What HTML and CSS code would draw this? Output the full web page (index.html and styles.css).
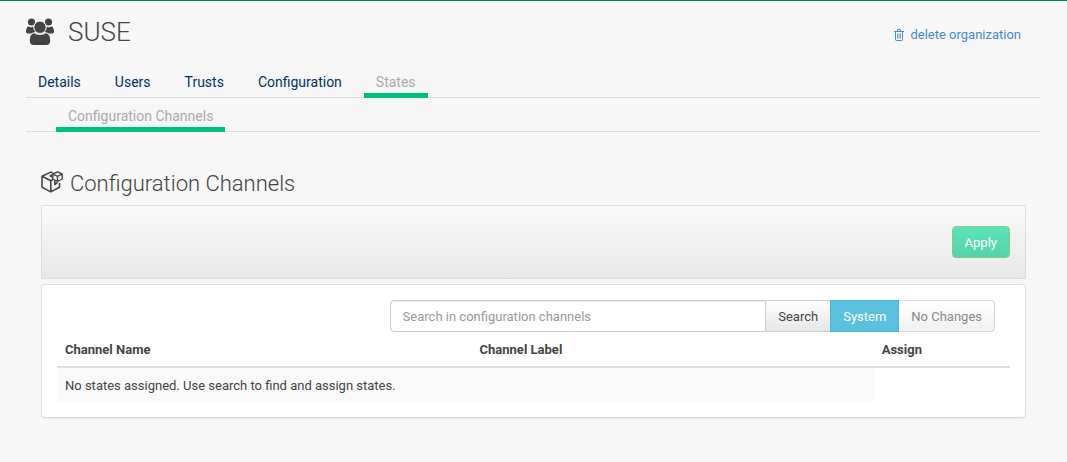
FILE: index.html
```html
<!DOCTYPE html>
<html lang="en">
<head>
<meta charset="utf-8">
<meta name="viewport" content="width=device-width, initial-scale=1">
<title>SUSE - Configuration Channels</title>
<link rel="stylesheet" href="styles.css">
</head>
<body>
<main class="page">
  <header class="page-header">
    <h1 class="page-title">
      <svg class="icon-group" viewBox="0 0 28 27" fill="currentColor" aria-hidden="true">
        <circle cx="5.500" cy="4" r="3.600"/>
        <circle cx="22.500" cy="4" r="3.600"/>
        <path d="M2.500 8.200C3.400 9 4.500 9.200 5.700 9.200C6.800 9.200 7.200 8.900 7.600 8.600C7.600 11 8.600 13 9.500 14C8 14.200 6.300 14.600 5.200 15.500H2.300C.8 15.500 0 14.900 0 13.400C0 11.500.7 8.900 2.500 8.200Z"/>
        <path d="M25.500 8.200C24.600 9 23.500 9.200 22.300 9.200C21.200 9.200 20.800 8.900 20.400 8.600C20.400 11 19.400 13 18.500 14C20 14.200 21.700 14.600 22.800 15.500H25.700C27.200 15.500 28 14.900 28 13.400C28 11.500 27.300 8.900 25.500 8.200Z"/>
        <circle cx="14" cy="9.300" r="6.200" stroke="#f7f7f7" stroke-width="1"/>
        <path d="M8.300 15.200C9.800 16.300 12 16.900 14 16.900C16 16.900 18.200 16.300 19.700 15.200C22.800 15.500 24.200 18.700 24.200 22.700C24.200 25.500 22.800 27 20.500 27H7.500C5.200 27 3.800 25.500 3.800 22.700C3.800 18.700 5.200 15.500 8.300 15.200Z"/>
      </svg>
      SUSE
    </h1>
    <a class="delete-link" href="#">
      <svg class="icon-trash" viewBox="0 0 10 12" fill="none" stroke="currentColor" aria-hidden="true">
        <path d="M0 2.500H10M3.500 2.500V.500H6.500V2.500M1.500 2.500V10.500Q1.500 11.500 2.500 11.500H7.500Q8.500 11.500 8.500 10.500V2.500"/>
        <path stroke-width=".8" d="M3.500 4.500V9.500M5 4.500V9.500M6.500 4.500V9.500"/>
      </svg>
      delete organization
    </a>
  </header>
  <nav class="tabs" aria-label="Organization">
    <a class="tab" href="#">Details</a>
    <a class="tab" href="#">Users</a>
    <a class="tab" href="#">Trusts</a>
    <a class="tab" href="#">Configuration</a>
    <a class="tab tab-active" href="#" aria-current="page">States</a>
  </nav>
  <nav class="tabs subtabs" aria-label="States">
    <a class="tab tab-active" href="#" aria-current="page">Configuration Channels</a>
  </nav>
  <section class="content">
    <h2 class="section-title">
      <svg class="icon-channels" viewBox="0 0 22 22" fill="none" stroke="currentColor" stroke-width="1.600" stroke-linejoin="round" stroke-linecap="round" aria-hidden="true">
        <path d="M11 1.500L9.800 1.100L1 5.300V16.200L9.800 20.900L18.500 16.200V12.500M1 5.300L9.800 9.700V20.900M9.800 9.700L11.800 8.600M13.800 10V13.500L16 11.800"/>
        <path stroke-width="1.400" d="M16.500 .900L11.800 3V8L16.500 10.500L21.200 8V3ZM11.800 3L16.500 5.400L21.200 3M16.500 5.400V10.500M11.800 3.500L9 4.800L11.800 6.500"/>
      </svg>
      Configuration Channels
    </h2>
    <div class="action-bar">
      <button class="btn btn-apply" type="button">Apply</button>
    </div>
    <div class="panel">
      <form class="search-group">
        <input class="search-input" type="text" placeholder="Search in configuration channels" aria-label="Search in configuration channels">
        <button class="btn btn-search" type="button">Search</button>
        <button class="btn btn-system" type="button">System</button>
        <button class="btn btn-changes" type="button" disabled>No Changes</button>
      </form>
      <table class="channels">
        <colgroup><col class="col-name"><col class="col-label"><col></colgroup>
        <thead>
          <tr><th scope="col">Channel Name</th><th scope="col">Channel Label</th><th scope="col">Assign</th></tr>
        </thead>
        <tbody>
          <tr><td class="empty" colspan="2">No states assigned. Use search to find and assign states.</td></tr>
        </tbody>
      </table>
    </div>
  </section>
</main>
</body>
</html>
```
FILE: styles.css
```css
* {
  box-sizing: border-box;
}

body {
  margin: 0;
  min-height: 100vh;
  border-top: 1px solid #00855c;
  background: #f7f7f7;
  color: #444;
  font: 13px/18px Roboto, "Liberation Sans", sans-serif;
}

a {
  color: #428bca;
  text-decoration: none;
}

.page {
  padding: 14px 26px;
}

.page-header {
  display: flex;
  align-items: center;
  justify-content: space-between;
  padding-right: 20px;
}

.page-title,
.section-title {
  display: flex;
  align-items: center;
  margin: 0;
  font-weight: 300;
}

.page-title {
  gap: 14px;
  font-size: 26px;
  line-height: 34px;
}

.icon-group {
  width: 28px;
  height: 27px;
  margin-bottom: 2px;
}

.delete-link {
  display: flex;
  align-items: center;
  gap: 6px;
  padding-top: 6px;
}

.icon-trash {
  width: 10px;
  height: 12px;
}

.tabs {
  display: flex;
  gap: 10px;
  margin-top: 18px;
  box-shadow: inset 0 -1px #ddd;
  font-size: 14px;
  line-height: 20px;
}

.subtabs {
  margin-top: 0;
  padding-left: 30px;
}

.tab {
  padding: 5px 12px 1px;
  border-bottom: 5px solid transparent;
  color: #00325f;
}

.subtabs .tab {
  padding: 8px 12px 1px;
}

.tab-active {
  border-bottom-color: #00c081;
  color: #aaa;
}

.content {
  padding: 37px 15px 0;
}

.section-title {
  gap: 7px;
  margin-bottom: 6px;
  font-size: 22px;
  line-height: 30px;
}

.icon-channels {
  width: 22px;
  height: 22px;
  margin-bottom: 4px;
}

.action-bar {
  display: flex;
  justify-content: flex-end;
  padding: 20px 15px;
  border: 1px solid #ddd;
  background: linear-gradient(#fafafa, #e8e8e8);
}

.btn {
  height: 32px;
  padding: 1px 12px 0;
  border: 1px solid #ccc;
  color: #444;
  font: inherit;
  white-space: nowrap;
}

.btn-apply {
  border-color: #86ca83;
  border-radius: 4px;
  background: linear-gradient(#5ae4b8, #55d2a8);
  color: #fff;
}

.panel {
  margin-top: 5px;
  padding: 15px;
  border: 1px solid #ddd;
  border-radius: 4px;
  background: #fff;
  box-shadow: 0 1px 1px rgba(0, 0, 0, 0.05);
}

.search-group {
  display: flex;
  width: 65.1%;
  margin-left: auto;
  padding-right: 15px;
}

.search-input {
  flex: 1;
  min-width: 0;
  height: 32px;
  padding: 0 12px;
  border: 1px solid #ccc;
  border-radius: 4px 0 0 4px;
  background: #fff;
  box-shadow: inset 0 1px 1px rgba(0, 0, 0, 0.08);
  color: #444;
  font: inherit;
}

.search-input::placeholder {
  color: #999;
  opacity: 1;
}

.btn-search {
  border-width: 1px 0;
  background: linear-gradient(#fff, #e6e6e6);
}

.btn-system {
  border-color: #46b8da;
  background: #5bc0de;
  color: #fff;
}

.btn-changes {
  border-color: #ddd;
  border-left: 0;
  border-radius: 0 4px 4px 0;
  background: linear-gradient(#fff, #f0f0f0);
  color: #888;
}

.channels {
  width: 100%;
  border-collapse: separate;
  border-spacing: 0;
  table-layout: fixed;
}

.col-name {
  width: 43.5%;
}

.col-label {
  width: 42.2%;
}

.channels th {
  padding: 9px 8px 7px;
  border-bottom: 2px solid #ddd;
  text-align: left;
  font-weight: 700;
}

.channels td {
  padding: 9px 8px 7px;
}

.channels .empty {
  background: #f9f9f9;
}
```
